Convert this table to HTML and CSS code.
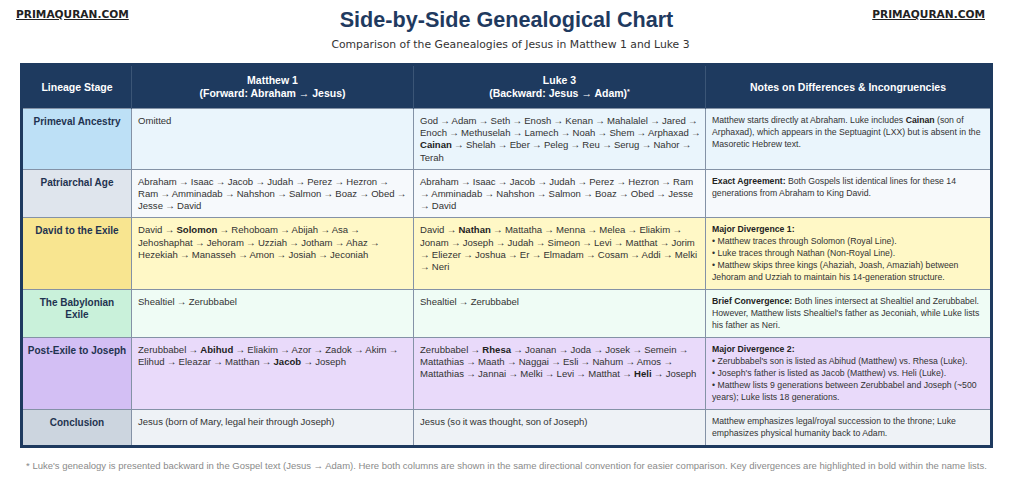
FILE: index.html
```html
<!DOCTYPE html>
<html lang="en">
<head>
<meta charset="utf-8">
<title>Side-by-Side Genealogical Chart</title>
<link rel="stylesheet" href="styles.css">
</head>
<body>
<div class="page">
  <header class="top">
    <a class="brand brand-left">PRIMAQURAN.COM</a>
    <div class="titles">
      <h1 class="title">Side-by-Side Genealogical Chart</h1>
      <p class="subtitle">Comparison of the Geanealogies of Jesus in Matthew 1 and Luke 3</p>
    </div>
    <a class="brand brand-right">PRIMAQURAN.COM</a>
  </header>

  <table class="chart">
    <colgroup>
      <col class="c-stage">
      <col class="c-matt">
      <col class="c-luke">
      <col class="c-notes">
    </colgroup>
    <thead>
      <tr>
        <th>Lineage Stage</th>
        <th>Matthew 1<br>(Forward: Abraham &rarr; Jesus)</th>
        <th>Luke 3<br>(Backward: Jesus &rarr; Adam)<sup>*</sup></th>
        <th>Notes on Differences &amp; Incongruencies</th>
      </tr>
    </thead>
    <tbody>
      <tr class="r-primeval">
        <td class="stage">Primeval Ancestry</td>
        <td class="names">Omitted</td>
        <td class="names">God &rarr; Adam &rarr; Seth &rarr; Enosh &rarr; Kenan &rarr; Mahalalel &rarr; Jared &rarr; Enoch &rarr; Methuselah &rarr; Lamech &rarr; Noah &rarr; Shem &rarr; Arphaxad &rarr; <b>Cainan</b> &rarr; Shelah &rarr; Eber &rarr; Peleg &rarr; Reu &rarr; Serug &rarr; Nahor &rarr; Terah</td>
        <td class="notes">Matthew starts directly at Abraham. Luke includes <b>Cainan</b> (son of Arphaxad), which appears in the Septuagint (LXX) but is absent in the Masoretic Hebrew text.</td>
      </tr>
      <tr class="r-patriarchal">
        <td class="stage">Patriarchal Age</td>
        <td class="names">Abraham &rarr; Isaac &rarr; Jacob &rarr; Judah &rarr; Perez &rarr; Hezron &rarr; Ram &rarr; Amminadab &rarr; Nahshon &rarr; Salmon &rarr; Boaz &rarr; Obed &rarr; Jesse &rarr; David</td>
        <td class="names">Abraham &rarr; Isaac &rarr; Jacob &rarr; Judah &rarr; Perez &rarr; Hezron &rarr; Ram &rarr; Amminadab &rarr; Nahshon &rarr; Salmon &rarr; Boaz &rarr; Obed &rarr; Jesse &rarr; David</td>
        <td class="notes"><b>Exact Agreement:</b> Both Gospels list identical lines for these 14 generations from Abraham to King David.</td>
      </tr>
      <tr class="r-david">
        <td class="stage">David to the Exile</td>
        <td class="names">David &rarr; <b>Solomon</b> &rarr; Rehoboam &rarr; Abijah &rarr; Asa &rarr; Jehoshaphat &rarr; Jehoram &rarr; Uzziah &rarr; Jotham &rarr; Ahaz &rarr; Hezekiah &rarr; Manasseh &rarr; Amon &rarr; Josiah &rarr; Jeconiah</td>
        <td class="names">David &rarr; <b>Nathan</b> &rarr; Mattatha &rarr; Menna &rarr; Melea &rarr; Eliakim &rarr; Jonam &rarr; Joseph &rarr; Judah &rarr; Simeon &rarr; Levi &rarr; Matthat &rarr; Jorim &rarr; Eliezer &rarr; Joshua &rarr; Er &rarr; Elmadam &rarr; Cosam &rarr; Addi &rarr; Melki &rarr; Neri</td>
        <td class="notes"><b>Major Divergence 1:</b><br>&bull; Matthew traces through Solomon (Royal Line).<br>&bull; Luke traces through Nathan (Non-Royal Line).<br>&bull; Matthew skips three kings (Ahaziah, Joash, Amaziah) between Jehoram and Uzziah to maintain his 14-generation structure.</td>
      </tr>
      <tr class="r-exile">
        <td class="stage">The Babylonian Exile</td>
        <td class="names">Shealtiel &rarr; Zerubbabel</td>
        <td class="names">Shealtiel &rarr; Zerubbabel</td>
        <td class="notes"><b>Brief Convergence:</b> Both lines intersect at Shealtiel and Zerubbabel. However, Matthew lists Shealtiel's father as Jeconiah, while Luke lists his father as Neri.</td>
      </tr>
      <tr class="r-post">
        <td class="stage">Post-Exile to Joseph</td>
        <td class="names">Zerubbabel &rarr; <b>Abihud</b> &rarr; Eliakim &rarr; Azor &rarr; Zadok &rarr; Akim &rarr; Elihud &rarr; Eleazar &rarr; Matthan &rarr; <b>Jacob</b> &rarr; Joseph</td>
        <td class="names">Zerubbabel &rarr; <b>Rhesa</b> &rarr; Joanan &rarr; Joda &rarr; Josek &rarr; Semein &rarr; Mattathias &rarr; Maath &rarr; Naggai &rarr; Esli &rarr; Nahum &rarr; Amos &rarr; Mattathias &rarr; Jannai &rarr; Melki &rarr; Levi &rarr; Matthat &rarr; <b>Heli</b> &rarr; Joseph</td>
        <td class="notes"><b>Major Divergence 2:</b><br>&bull; Zerubbabel's son is listed as Abihud (Matthew) vs. Rhesa (Luke).<br>&bull; Joseph's father is listed as Jacob (Matthew) vs. Heli (Luke).<br>&bull; Matthew lists 9 generations between Zerubbabel and Joseph (~500 years); Luke lists 18 generations.</td>
      </tr>
      <tr class="r-concl">
        <td class="stage">Conclusion</td>
        <td class="names">Jesus (born of Mary, legal heir through Joseph)</td>
        <td class="names">Jesus (so it was thought, son of Joseph)</td>
        <td class="notes">Matthew emphasizes legal/royal succession to the throne; Luke emphasizes physical humanity back to Adam.</td>
      </tr>
    </tbody>
  </table>

  <p class="footnote">* Luke's genealogy is presented backward in the Gospel text (Jesus &rarr; Adam). Here both columns are shown in the same directional convention for easier comparison. Key divergences are highlighted in bold within the name lists.</p>
</div>
</body>
</html>
```

FILE: styles.css
```css
* { box-sizing: border-box; }

html, body {
  margin: 0;
  padding: 0;
  background: #ffffff;
}

body {
  font-family: "Liberation Sans", Arial, sans-serif;
  color: #333;
}

.page {
  width: 1013px;
}

.top {
  display: grid;
  grid-template-columns: 1fr auto 1fr;
  align-items: start;
  height: 63px;
}

.brand {
  font-family: "DejaVu Sans", Verdana, sans-serif;
  font-weight: bold;
  font-size: 10.6px;
  color: #222;
  text-decoration: underline;
  margin-top: 8px;
}

.brand-left {
  justify-self: start;
  margin-left: 16px;
}

.brand-right {
  justify-self: end;
  margin-right: 28px;
}

.titles {
  text-align: center;
}

.title {
  margin: 7px 0 0;
  font-family: "Liberation Sans", Arial, sans-serif;
  font-size: 21.6px;
  line-height: 26px;
  font-weight: bold;
  color: #1f3a5f;
}

.subtitle {
  margin: 5px 0 0 8px;
  font-family: "DejaVu Sans", Verdana, sans-serif;
  font-size: 10.8px;
  line-height: 13px;
  color: #333;
}

.chart {
  margin-left: 20px;
  width: 970px;
  table-layout: fixed;
  border-collapse: collapse;
  border: 3px solid #1e3a5f;
}

.c-stage { width: 110px; }
.c-matt { width: 282px; }
.c-luke { width: 292px; }
.c-notes { width: 286px; }

.chart th {
  background: #1e3a5f;
  color: #ffffff;
  font-size: 10.5px;
  line-height: 13px;
  font-weight: bold;
  padding: 8px 6px;
  height: 41px;
  text-align: center;
  vertical-align: middle;
  border-left: 1px solid #3b5576;
}

.chart th:first-child { border-left: none; }

.chart th sup {
  font-size: 7px;
  vertical-align: 3px;
  line-height: 0;
}

.chart td {
  border: 1px solid #8492a6;
  vertical-align: top;
  padding: 6px 6px 5px;
  color: #333;
}

.chart td.stage {
  text-align: center;
  font-weight: bold;
  font-size: 10px;
  line-height: 12px;
  color: #1f3350;
  padding: 7px 4px 5px;
}

.chart td.names {
  font-size: 9.55px;
  line-height: 12.2px;
  word-spacing: -0.4px;
  padding-right: 4px;
}

.notes {
  font-size: 8.7px;
  line-height: 11.95px;
}

.notes b, .names b { color: #222; }

.r-primeval td { background: #eaf5fc; }
.r-primeval .stage { background: #bde0f6; }

.r-patriarchal td { background: #f6f9fc; }
.r-patriarchal .stage { background: #dfe5ed; }

.r-david td { background: #fff8c6; }
.r-david .stage { background: #f8e590; }

.r-exile td { background: #effcf5; }
.r-exile .stage { background: #c9f1da; }

.r-post td { background: #e9dafa; }
.r-post .stage { background: #d3bff4; }

.r-concl td { background: #eef2f6; }
.r-concl .stage { background: #ccd5df; }

.footnote {
  margin: 12px 0 0;
  text-align: center;
  font-size: 9.5px;
  line-height: 12px;
  color: #8a8a8a;
}
```
